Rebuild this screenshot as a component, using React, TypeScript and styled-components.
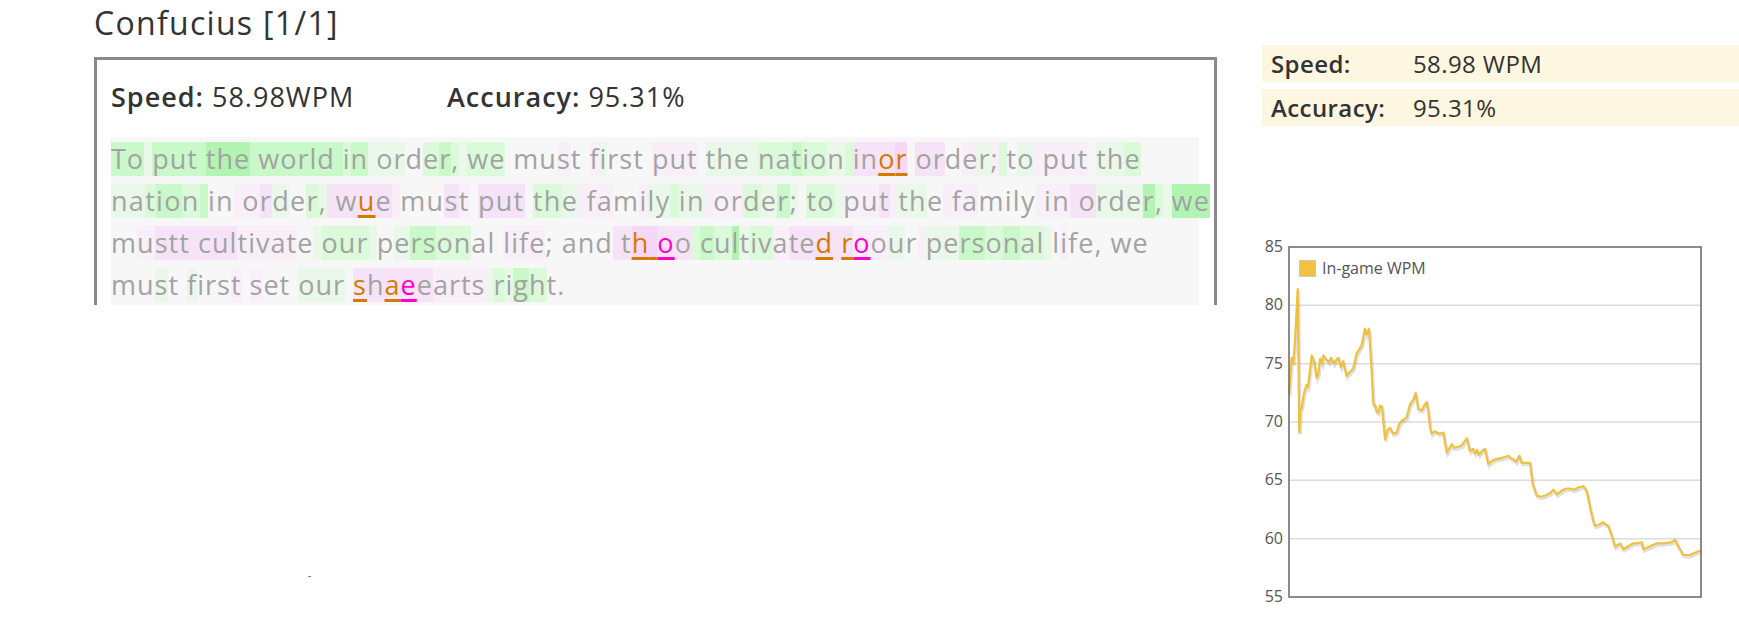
import React from 'react';
import styled, { createGlobalStyle } from 'styled-components';

type Tone = '' | 'g1' | 'g2' | 'g3' | 'g4' | 'p1' | 'p2' | 'p3';
type Seg = [string, Tone, ('o' | 'm')?];

const tones: Record<Tone, string> = {
    '': 'transparent',
    g1: '#e9f8e9',
    g2: '#dafada',
    g3: '#c9f8c9',
    g4: '#b2f5b2',
    p1: '#f8eff8',
    p2: '#f7e3f7',
    p3: '#f6d8f6',
};

// typed passage, one entry per rendered line
const lines: Seg[][] = [
    [
        ['To', 'g3'], [' ', 'g1'], ['put ', 'g3'], ['the', 'g4'], [' world ', 'g3'], ['i', 'g2'], ['n', 'g3'],
        [' or', 'g1'], ['d', ''], ['e', 'g2'], ['r', 'g3'], [',', 'g2'], [' ', 'g1'], ['we', 'g2'], [' mu', ''],
        ['s', 'p1'], ['t ', ''], ['f', 'p1'], ['i', 'g1'], ['rst ', ''], ['put', 'p1'], [' ', ''], ['the ', 'g1'],
        ['na', 'g2'], ['t', 'g3'], ['io', 'g2'], ['n', 'g1'], [' ', 'g2'], ['in', 'p2'], ['o', 'p2', 'o'],
        ['r', 'p3', 'o'], [' ', ''], ['or', 'p2'], ['d', ''], ['e', 'p1'], ['r', 'g1'], [';', 'p1'], [' ', 'g2'],
        ['t', ''], ['o', 'g1'], [' put', 'p1'], [' ', ''], ['th', 'g1'], ['e', 'g2'],
    ],
    [
        ['na', 'g1'], ['t', 'g2'], ['io', 'g3'], ['n', 'g2'], [' ', 'g3'], ['in', ''], [' o', 'p1'], ['r', 'p2'],
        ['d', 'g1'], ['e', ''], ['r', 'g2'], [',', 'g1'], [' w', 'p2'], ['u', 'p2', 'o'], ['e', 'p2'], [' ', 'p1'],
        ['mu', ''], ['s', 'p2'], ['t', 'p1'], [' ', ''], ['put', 'p2'], [' ', ''], ['th', 'g2'], ['e', 'g1'],
        [' fa', 'p1'], ['m', ''], ['i', 'p1'], ['ly', 'g1'], [' ', 'g2'], ['in', 'g1'], [' ', 'p1'], ['or', 'p1'],
        ['d', 'g2'], ['e', 'g1'], ['r', 'g3'], [';', 'g1'], [' ', ''], ['to', 'g2'], [' ', 'g1'], ['pu', 'p1'],
        ['t', 'p2'], [' ', 'p1'], ['th', 'g1'], ['e', ''], [' fa', 'p1'], ['mily', ''], [' ', 'p1'], ['in', 'p1'],
        [' o', 'p2'], ['rd', 'g1'], ['e', 'g1'], ['r', 'g4'], [',', 'g2'], [' ', 'g1'], ['we', 'g4'],
    ],
    [
        ['m', ''], ['u', 'p1'], ['stt cul', 'p2'], ['tivat', 'p1'], ['e', ''], [' ', 'g1'], ['our', 'g2'],
        [' ', 'g1'], ['p', ''], ['e', 'g1'], ['rs', 'g3'], ['o', 'g2'], ['n', 'g2'], ['al', ''], [' ', ''],
        ['li', 'p1'], ['fe', 'p1'], ['; and', ''], [' t', 'p2'], ['h', 'p3', 'o'], [' ', 'p3', 'o'], ['o', 'p2', 'm'],
        ['o', 'p2'], [' ', 'g2'], ['c', 'g3'], ['u', 'g2'], ['l', 'g4'], ['t', 'g1'], ['iv', 'g2'], ['a', 'p1'],
        ['te', 'p2'], ['d', 'p2', 'o'], [' ', 'p2'], ['r', 'p2', 'o'], ['o', 'p1', 'm'], ['o', 'p1'], ['u', 'g1'],
        ['r', ''], [' ', 'p1'], ['pe', 'g1'], ['rs', 'g3'], ['o', 'g2'], ['n', 'g3'], ['al', 'g2'], [' ', 'g1'],
        ['l', ''], ['i', 'p1'], ['fe, we', ''],
    ],
    [
        ['mu', ''], ['s', 'g1'], ['t ', ''], ['f', 'g1'], ['irs', ''], ['t', 'p1'], [' ', ''], ['s', 'p1'],
        ['et ', ''], ['our', 'g1'], [' ', ''], ['s', 'p2', 'o'], ['h', 'p2'], ['a', 'p2', 'o'], ['e', 'p2', 'm'],
        ['e', 'p2'], ['arts', 'p1'], [' ', 'g1'], ['r', 'g2'], ['i', 'g1'], ['g', 'g3'], ['h', 'g2'], ['t.', ''],
    ],
];

const lineTracking = [1, 1.3, 1.05, 1];

// in-game wpm samples: [px from chart left, wpm]
const wpm: [number, number][] = [
    [0, 72.4], [2.7, 75.5], [4.3, 75.0], [6, 77], [8.7, 81.4], [10.3, 69.1], [11.5, 71.2], [12.7, 71.2],
    [15, 72.5], [17.7, 73.2], [19, 73.0], [22.7, 75.7], [25, 75.2], [27.7, 73.8], [29, 74], [31, 75.4],
    [33, 75.0], [34.3, 75.7], [37, 75.4], [40, 75.1], [42, 75.5], [45, 75.0], [47, 75.3], [49.3, 75.5],
    [52, 74.7], [54, 75.2], [57.7, 73.95], [60, 74.2], [64.3, 74.6], [67.7, 75.9], [70, 76.2], [72.7, 76.6],
    [76, 78.0], [77.7, 77.5], [80, 78.0], [82.7, 74.3], [84.3, 71.5], [86, 71.5], [87.5, 70.9], [89.3, 70.8],
    [91, 71.4], [93, 71.3], [96, 68.5], [98.5, 69.3], [101, 69.5], [104, 69.0], [107.7, 69.1], [110, 69.8],
    [112.7, 70.1], [117.7, 70.4], [121, 71.5], [124.3, 71.9], [126.7, 72.5], [128, 71.8], [129.3, 71.1],
    [133, 71.0], [135, 71.4], [137.7, 71.7], [139.5, 70.8], [141, 69.5], [142.7, 69.0], [146, 69.2],
    [150, 69.0], [154.3, 69.1], [157.7, 67.4], [160, 67.7], [162.7, 68.1], [165, 67.8], [170, 67.9],
    [172.7, 68.0], [177.7, 68.6], [181, 67.5], [184, 67.7], [186, 67.3], [188, 67.6], [190, 67.2],
    [193, 67.5], [196, 67.7], [199.3, 66.4], [202, 66.6], [206, 66.8], [212, 66.9], [219.3, 67.1],
    [222, 66.9], [224.3, 66.8], [227, 66.6], [230.3, 67.1], [232.7, 66.5], [238, 66.5], [241, 66.5],
    [243.7, 64.7], [247.7, 63.7], [252, 63.6], [256, 63.7], [261, 63.9], [264.3, 64.2], [267.7, 63.8],
    [271, 64.0], [274.3, 64.2], [278, 64.3], [281, 64.3], [285, 64.2], [290, 64.4], [294.3, 64.5],
    [297.7, 64.1], [301, 62.7], [304.3, 61.5], [306, 61.1], [310, 61.2], [314.3, 61.4], [317, 61.2],
    [319.3, 61.1], [323, 60.2], [326, 59.3], [331, 59.6], [334.3, 59.1], [340, 59.4], [344.3, 59.6],
    [348, 59.6], [352.7, 59.7], [354.3, 59.1], [360, 59.3], [367.7, 59.6], [375, 59.6], [382.7, 59.7],
    [386, 59.9], [389, 59.4], [391, 59.1], [394.3, 58.6], [401, 58.6], [406, 58.8], [412, 59.0],
];

const CH = { left: 27, top: 20, width: 412, height: 350, max: 85, min: 55 };
const yOf = (w: number) => CH.top + ((CH.max - w) * CH.height) / (CH.max - CH.min);

const WpmChart = () => {
    const pts = wpm.map(([x, w]) => `${(CH.left + x).toFixed(1)},${yOf(w).toFixed(1)}`).join(' ');
    const ticks = [85, 80, 75, 70, 65, 60, 55];
    return (
        <ChartSvg width={477} height={390} viewBox="0 0 477 390">
            {ticks.slice(1, -1).map((t) => (
                <line key={t} x1={CH.left} x2={CH.left + CH.width} y1={yOf(t)} y2={yOf(t)} stroke="#dcdcdc" strokeWidth={1.5} />
            ))}
            {ticks.map((t) => (
                <text key={t} x={21} y={yOf(t) + 5} textAnchor="end" fontSize={16} fill="#555">{t}</text>
            ))}
            <polyline points={pts} fill="none" stroke="#000" strokeOpacity={0.12} strokeWidth={3} transform="translate(1,2)" />
            <polyline points={pts} fill="none" stroke="#efc13f" strokeWidth={2.2} strokeLinejoin="round" />
            <rect x={CH.left} y={CH.top} width={CH.width} height={CH.height} fill="none" stroke="#666" strokeWidth={1.5} />
            <rect x={37.5} y={CH.top + 13.5} width={16} height={16} fill="#f0c23f" stroke="#c8c8c8" />
            <text x={60} y={CH.top + 27} fontSize={16} fill="#555">In-game WPM</text>
        </ChartSvg>
    );
};

const App = () => {
    return (
        <>
            <GlobalStyle />
            <Page>
                <LeftColumn>
                    <Title>Confucius [1/1]</Title>
                    <ResultBox>
                        <Stats>
                            <Stat><b>Speed:</b> 58.98WPM</Stat>
                            <Stat><b>Accuracy:</b> 95.31%</Stat>
                        </Stats>
                        <Passage>
                            {lines.map((line, i) => (
                                <Line key={i} $tracking={lineTracking[i]}>
                                    {line.map(([txt, tone, err], j) => (
                                        <Chunk key={j} $tone={tone} $err={err}>{txt}</Chunk>
                                    ))}
                                </Line>
                            ))}
                        </Passage>
                    </ResultBox>
                    <Speck />
                </LeftColumn>

                <RightColumn>
                    <StatRow>
                        <StatLabel>Speed:</StatLabel>
                        <StatValue>58.98 WPM</StatValue>
                    </StatRow>
                    <StatRow>
                        <StatLabel>Accuracy:</StatLabel>
                        <StatValue>95.31%</StatValue>
                    </StatRow>
                    <WpmChart />
                </RightColumn>
            </Page>
        </>
    );
};

const GlobalStyle = createGlobalStyle`
    body {
        margin: 0;
        background: #fff;
        font-family: "Open Sans", "Noto Sans", sans-serif;
        color: #333;
    }
`;

const Page = styled.div`
    display: flex;
    flex-direction: row;
    gap: 45px;
    width: 1739px;
    height: 635px;
    padding-left: 94px;
    box-sizing: border-box;
    overflow: hidden;
`;

const LeftColumn = styled.div`
    display: flex;
    flex-direction: column;
    width: 1123px;
`;

const Title = styled.div`
    font-size: 32px;
    line-height: 46px;
    letter-spacing: 1.3px;
    color: #333;
    margin-bottom: 11px;
`;

const ResultBox = styled.div`
    border: 3px solid #8a8a8a;
    border-bottom: none;
    padding: 0 15px 0 14px;
`;

const Stats = styled.div`
    display: flex;
    align-items: center;
    height: 72px;
    padding-bottom: 5px;
`;

const Stat = styled.div`
    width: 336px;
    font-size: 27px;
    letter-spacing: 1px;
    color: #333;

    b {
        font-weight: 600;
    }
`;

const Passage = styled.div`
    background: #f7f7f7;
    padding-top: 5px;
    height: 168px;
    box-sizing: border-box;
    display: flex;
    flex-direction: column;
    gap: 8px;
`;

const Line = styled.div<{ $tracking: number }>`
    display: flex;
    height: 34px;
    white-space: pre;
    font-size: 27px;
    line-height: 34px;
    letter-spacing: ${(p) => p.$tracking}px;
    color: #a3a3a3;
`;

const Chunk = styled.span<{ $tone: Tone; $err?: 'o' | 'm' }>`
    background: ${(p) => tones[p.$tone]};
    color: ${(p) => (p.$err === 'o' ? '#d47a00' : p.$err === 'm' ? '#f0c' : 'inherit')};
    text-decoration: ${(p) => (p.$err ? 'underline' : 'none')};
    text-decoration-thickness: 3px;
    text-underline-offset: 4px;
`;

const Speck = styled.div`
    width: 3px;
    height: 1px;
    margin: 271px 0 0 214px;
    background: linear-gradient(90deg, #d9a060, #4a6fa0);
`;

const RightColumn = styled.div`
    display: flex;
    flex-direction: column;
    width: 477px;
    padding-top: 45px;
`;

const StatRow = styled.div`
    display: grid;
    grid-template-columns: 142px 1fr;
    align-items: center;
    height: 37px;
    margin-bottom: 7px;
    padding-left: 9px;
    background: #fdf6e1;
    font-size: 24px;
    letter-spacing: 0.4px;
    color: #333;
`;

const StatLabel = styled.span`
    font-weight: 600;
`;

const StatValue = styled.span`
    font-weight: 400;
`;

const ChartSvg = styled.svg`
    display: block;
    margin-top: 94px;
    overflow: visible;
    font-family: "Open Sans", "Noto Sans", sans-serif;
`;

export default App;
